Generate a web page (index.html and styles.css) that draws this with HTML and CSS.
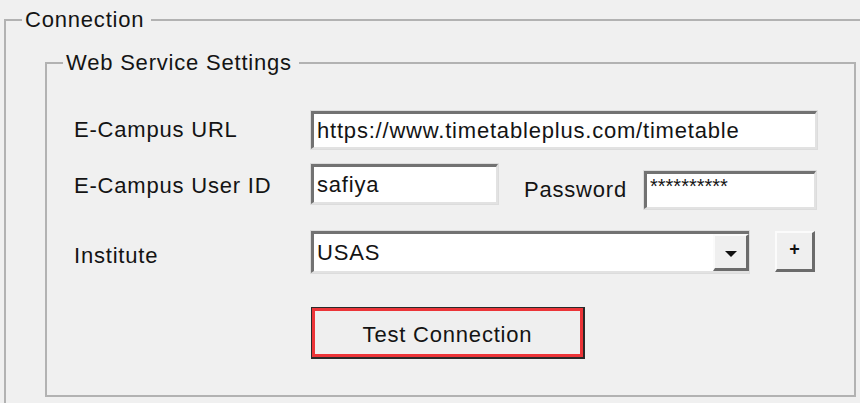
FILE: index.html
```html
<!DOCTYPE html>
<html lang="en">
<head>
    <meta charset="UTF-8">
    <meta name="viewport" content="width=device-width, initial-scale=1.0">
    <title>Connection</title>
    <link rel="stylesheet" href="styles.css">
</head>
<body>
    <fieldset class="group outer">
        <legend>Connection</legend>
        <fieldset class="group inner">
            <legend>Web Service Settings</legend>
            <div class="form">
                <div class="row row-url">
                    <label class="label">E-Campus URL</label>
                    <input class="textbox url" type="text" value="https://www.timetableplus.com/timetable" readonly>
                </div>
                <div class="row row-user">
                    <label class="label">E-Campus User ID</label>
                    <input class="textbox user" type="text" value="safiya" readonly>
                    <div class="pass-group">
                        <label class="label pass-label">Password</label>
                        <input class="textbox pass" type="text" value="**********" readonly>
                    </div>
                </div>
                <div class="row row-inst">
                    <label class="label inst-label">Institute</label>
                    <div class="combo">
                        <span class="combo-text">USAS</span>
                        <span class="combo-btn"><span class="arrow"></span></span>
                    </div>
                    <button class="raised plus">+</button>
                </div>
                <div class="row row-test">
                    <button class="test-btn"><span class="focus-ring">Test Connection</span></button>
                </div>
            </div>
        </fieldset>
    </fieldset>
</body>
</html>
```

FILE: styles.css
```css
html, body {
    margin: 0;
    padding: 0;
    background-color: #f0f0f0; /* window face */
    overflow: hidden;
    width: 860px;
    height: 403px;
}

body {
    font-family: "Liberation Sans", Arial, sans-serif;
    font-size: 22px;
    letter-spacing: 0.8px;
    color: #141414;
}

.group {
    margin: 0;
    padding: 0;
    min-inline-size: 0;
    border: 2px solid #b2b2b2;
}

.group legend {
    margin-left: 16px;
    padding: 0 7px 0 3px;
    line-height: 26px;
    color: #141414;
}

.outer {
    box-sizing: border-box;
    margin: 7px 0 0 4px;
    width: 856px;
    height: 396px;
    border-right: none;
    border-bottom: none;
}

.inner {
    margin: 17px 0 0 39px;
    width: 807px;
    height: 343px;
}

.form {
    padding: 35px 0 0 27px;
}

.row {
    display: flex;
    align-items: center;
}

.label {
    width: 237px;
    flex-shrink: 0;
}

.row-url {
    height: 38px;
    margin-bottom: 15px;
}

.row-user {
    height: 40px;
    margin-bottom: 27px;
    align-items: flex-start;
}

.row-user > .label {
    line-height: 40px;
    padding-top: 2px;
}

.row-inst {
    height: 42px;
    margin-bottom: 34px;
}

.textbox {
    box-sizing: border-box;
    margin: 0;
    padding: 0 0 0 3px;
    font: inherit;
    letter-spacing: inherit;
    color: #141414;
    background-color: #ffffff;
    border-style: solid;
    border-width: 3px 2px 2px 3px;
    border-color: #727272 #e2e2e2 #e2e2e2 #727272;
    box-shadow: 0 0 0 1px #dcdcdc;
    outline: none;
}

.url {
    width: 506px;
    height: 38px;
}

.user {
    width: 187px;
    height: 40px;
}

.pass-group {
    display: flex;
    align-items: center;
    margin: 7px 0 0 26px;
    height: 38px;
}

.pass-label {
    width: auto;
    margin-right: 17px;
}

.pass {
    width: 172px;
    height: 38px;
    padding-bottom: 8px;
    font-size: 20px;
    letter-spacing: 0;
}

.inst-label {
    padding-top: 8px;
}

.combo {
    box-sizing: border-box;
    display: flex;
    width: 438px;
    height: 42px;
    background-color: #ffffff;
    border-style: solid;
    border-width: 3px 0 2px 3px;
    border-color: #727272 #e2e2e2 #e2e2e2 #727272;
    box-shadow: 0 0 0 1px #dcdcdc;
}

.combo-text {
    flex: 1;
    padding-left: 3px;
    line-height: 37px;
}

.combo-btn {
    box-sizing: border-box;
    width: 36px;
    display: flex;
    align-items: center;
    justify-content: center;
    background-color: #efefef;
    border-style: solid;
    border-width: 2px 3px 3px 2px;
    border-color: #fbfbfb #6b6b6b #6b6b6b #fbfbfb;
}

.arrow {
    width: 0;
    height: 0;
    margin-top: 4px;
    border-left: 6px solid transparent;
    border-right: 6px solid transparent;
    border-top: 6px solid #111111;
}

.raised {
    box-sizing: border-box;
    background-color: #efefef;
    border-style: solid;
    border-width: 2px 3px 3px 2px;
    border-color: #fbfbfb #6b6b6b #6b6b6b #fbfbfb;
    padding: 0;
    margin: 0;
    font-family: inherit;
}

.plus {
    width: 40px;
    height: 41px;
    margin-left: 26px;
    align-self: flex-start;
    font-size: 18px;
    font-weight: bold;
    line-height: 30px;
    color: #111111;
    padding-bottom: 4px;
}

.row-test {
    padding-left: 237px;
}

.test-btn {
    box-sizing: border-box;
    width: 274px;
    height: 52px;
    padding: 0;
    margin: 0;
    border-style: solid;
    border-width: 1px 2px 2px 1px;
    border-color: #2a2a2a;
    background-color: #efefef;
    font: inherit;
    letter-spacing: inherit;
    color: #141414;
}

.focus-ring {
    box-sizing: border-box;
    display: flex;
    align-items: center;
    justify-content: center;
    width: 100%;
    height: 100%;
    border: 3px solid #ec3438; /* red highlight */
    padding-top: 4px;
}
```
